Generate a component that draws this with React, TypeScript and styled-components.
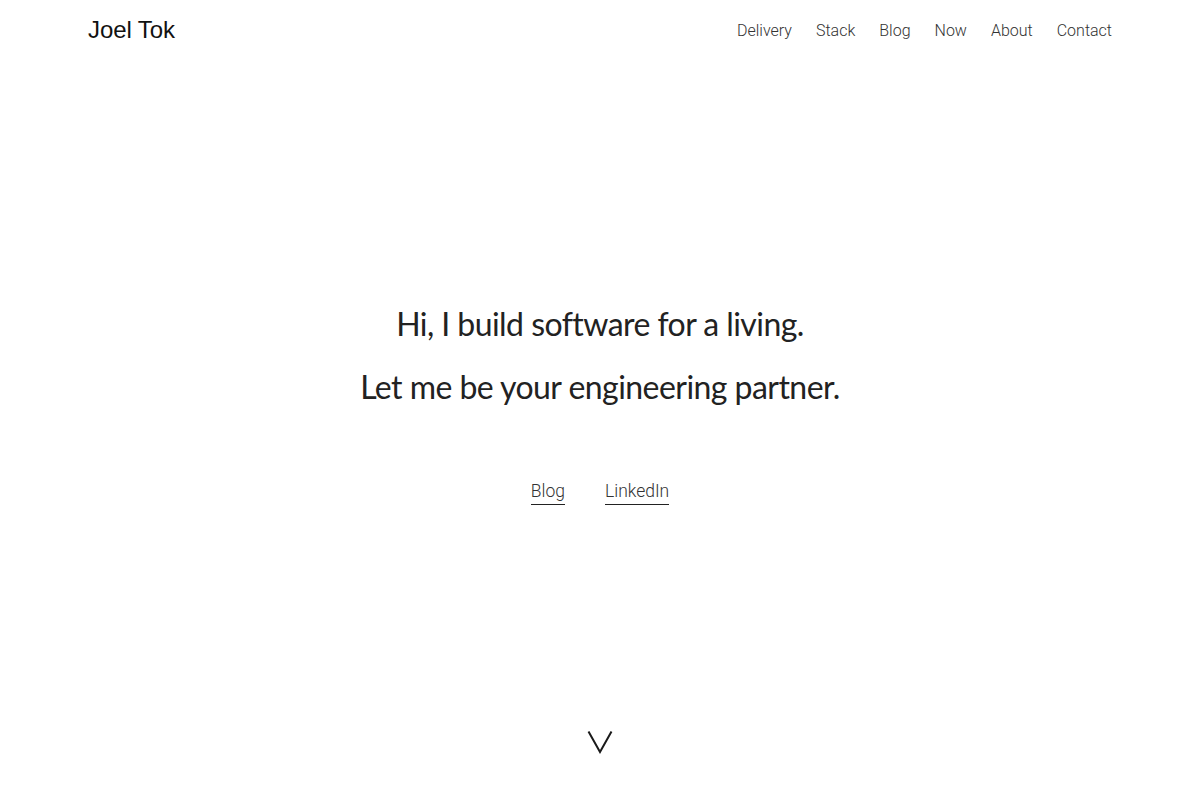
import React from "react";
import styled, { createGlobalStyle } from "styled-components";

const GlobalStyle = createGlobalStyle`
	html, body {
		margin: 0;
		padding: 0;
		background: #ffffff;
	}
	#root {
		min-height: 100vh;
	}
`;

const navLinks = ["Delivery", "Stack", "Blog", "Now", "About", "Contact"];

const App = () => {
	return (
		<>
			<GlobalStyle />
			<Page>
				<Header>
					<Logo href="#">Joel Tok</Logo>
					<Nav>
						{navLinks.map((item) => (
							<NavLink key={item} href="#">
								{item}
							</NavLink>
						))}
					</Nav>
				</Header>
				<Hero>
					<Headline>Hi, I build software for a living.</Headline>
					<Headline>Let me be your engineering partner.</Headline>
					<Links>
						<UnderlineLink href="#">Blog</UnderlineLink>
						<UnderlineLink href="#">LinkedIn</UnderlineLink>
					</Links>
				</Hero>
				<ScrollHint>
					<svg width="26" height="24" viewBox="0 0 26 24" fill="none">
						<path
							d="M1.5 1.5 L13 22 L24.5 1.5"
							stroke="#1a1a1a"
							strokeWidth="2"
							strokeLinejoin="miter"
						/>
					</svg>
				</ScrollHint>
			</Page>
		</>
	);
};

export default App;

const Page = styled.div`
	display: flex;
	flex-direction: column;
	min-height: 100vh;
	box-sizing: border-box;
`;

const Header = styled.header`
	display: flex;
	align-items: center;
	justify-content: space-between;
	height: 60px;
	padding: 0 88px;
`;

const Logo = styled.a`
	font-family: "Liberation Sans", Arial, sans-serif;
	font-size: 24px;
	letter-spacing: -0.1px;
	color: #111;
	text-decoration: none;
`;

const Nav = styled.nav`
	display: flex;
	align-items: center;
	gap: 24px;
`;

const NavLink = styled.a`
	font-family: Roboto, "Noto Sans", sans-serif;
	font-size: 16px;
	font-weight: 300;
	color: #333;
	text-decoration: none;
`;

const Hero = styled.main`
	flex: 1;
	display: flex;
	flex-direction: column;
	align-items: center;
	justify-content: center;
	padding-top: 6px;
`;

const Headline = styled.h1`
	margin: 0;
	font-family: Lato, "Noto Sans", sans-serif;
	font-size: 32px;
	font-weight: 400;
	letter-spacing: -0.55px;
	line-height: 63px;
	color: #222;
	text-align: center;
`;

const Links = styled.div`
	display: flex;
	gap: 40px;
	margin-top: 63px;
`;

const UnderlineLink = styled.a`
	font-family: Roboto, "Noto Sans", sans-serif;
	font-size: 17.5px;
	font-weight: 300;
	color: #333;
	text-decoration: none;
	padding-bottom: 3px;
	border-bottom: 1px solid #222;
`;

const ScrollHint = styled.div`
	display: flex;
	justify-content: center;
	padding-bottom: 46px;
`;
